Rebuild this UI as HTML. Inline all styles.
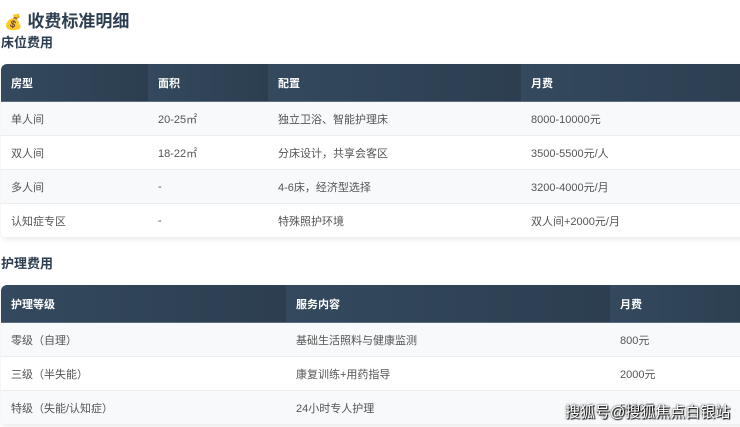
<!DOCTYPE html>
<html><head><meta charset="utf-8"><style>
body{margin:0;width:740px;height:427px;overflow:hidden;background:#fff;font-family:"Liberation Sans","Noto Sans CJK SC",sans-serif;color:#2c3e50;position:relative}
.t{position:absolute;left:4px;top:7px;font-size:17px;font-weight:bold;color:#2c3e50}
.h{position:absolute;left:1px;font-size:13px;font-weight:bold;color:#2c3e50}
table{position:absolute;left:1px;width:760px;border-collapse:collapse;border-radius:6px 0 0 6px;overflow:hidden;box-shadow:0 2px 6px rgba(0,0,0,.08);font-size:11px}
th{background:linear-gradient(90deg,#34495e,#2c3e50);color:#fff;text-align:left;font-weight:bold;height:37px;padding:0 0 0 10px;border-bottom:1px solid #5d6d7e}
td{height:33px;padding:0 0 0 10px;color:#555;border-bottom:1px solid #eceff2}
tr:nth-child(odd) td{background:#f7f9fb}
tr:nth-child(even) td{background:#fff}
.wm{position:absolute;left:565px;top:401px;font-size:15px;color:#fff;text-shadow:0 0 2px #000,1px 1px 1px #000}
</style></head><body>
<div class="t"><span style="font-size:15px">💰</span> 收费标准明细</div>
<div class="h" style="top:32px">床位费用</div>
<table style="top:64px"><thead><tr><th style="width:137px">房型</th><th style="width:110px">面积</th><th style="width:243px">配置</th><th>月费</th></tr></thead>
<tbody><tr><td>单人间</td><td>20-25㎡</td><td>独立卫浴、智能护理床</td><td>8000-10000元</td></tr>
<tr><td>双人间</td><td>18-22㎡</td><td>分床设计，共享会客区</td><td>3500-5500元/人</td></tr>
<tr><td>多人间</td><td>-</td><td>4-6床，经济型选择</td><td>3200-4000元/月</td></tr>
<tr><td>认知症专区</td><td>-</td><td>特殊照护环境</td><td>双人间+2000元/月</td></tr></tbody></table>
<div class="h" style="top:253px">护理费用</div>
<table style="top:285px"><thead><tr><th style="width:275px">护理等级</th><th style="width:314px">服务内容</th><th>月费</th></tr></thead>
<tbody><tr><td>零级（自理）</td><td>基础生活照料与健康监测</td><td>800元</td></tr>
<tr><td>三级（半失能）</td><td>康复训练+用药指导</td><td>2000元</td></tr>
<tr><td>特级（失能/认知症）</td><td>24小时专人护理</td><td>5000元</td></tr></tbody></table>
<div class="wm">搜狐号@搜狐焦点白银站</div>
</body></html>
